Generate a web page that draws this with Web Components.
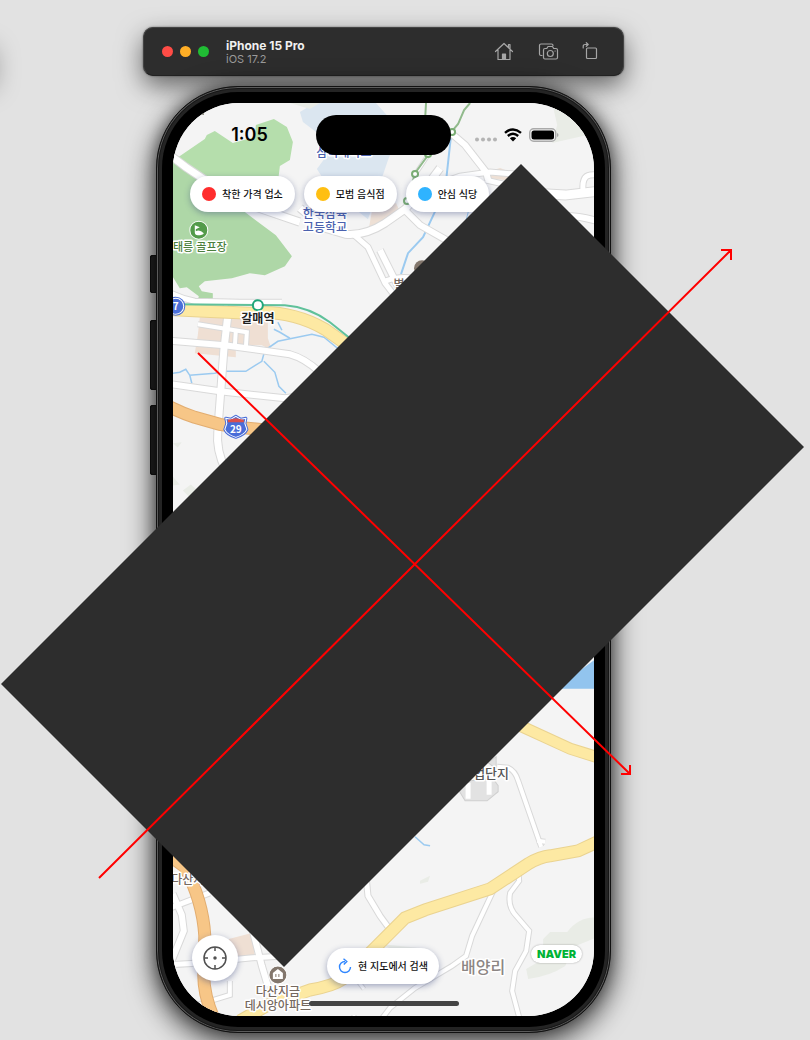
<!DOCTYPE html>
<html lang="ko">
<head>
<meta charset="utf-8">
<meta name="viewport" content="width=device-width, initial-scale=1">
<title>iPhone 15 Pro – iOS 17.2</title>
<style>
  body { margin: 0; background: #e2e2e2; font-family: Inter, "Noto Sans CJK KR", sans-serif; }
</style>
</head>
<body>
<sim-desktop>
  <sim-toolbar>
    <span slot="title">iPhone 15 Pro</span>
    <span slot="subtitle">iOS 17.2</span>
  </sim-toolbar>
  <phone-frame>
    <map-screen>
      <status-bar slot="status">1:05</status-bar>
      <filter-chip slot="filters" color="#ff2d2d">착한 가격 업소</filter-chip>
      <filter-chip slot="filters" color="#ffbf12">모범 음식점</filter-chip>
      <filter-chip slot="filters" color="#2fb3ff">안심 식당</filter-chip>
    </map-screen>
  </phone-frame>
  <axis-overlay slot="overlay"></axis-overlay>
</sim-desktop>

<script>
class Base extends HTMLElement {
  connectedCallback() {
    if (this.shadowRoot) return;
    const t = document.createElement('template');
    t.innerHTML = this.view();
    this.attachShadow({ mode: 'open' }).append(t.content.cloneNode(true));
  }
}

customElements.define('sim-desktop', class extends Base {
  view() { return `
    <style>
      :host { display: grid; grid-template-columns: 143fr 481px 186fr; min-height: 100vh; overflow: hidden; position: relative; }
      :host::before { content: ""; position: absolute; left: -44px; top: 40px; width: 38px; height: 40px; box-shadow: 0 8px 26px rgba(0,0,0,.35); }
      .stage { grid-column: 2; position: relative; display: flex; flex-direction: column; gap: 10px; padding: 27px 0 7px; box-sizing: border-box; }
    </style>
    <main class="stage"><slot></slot><slot name="overlay"></slot></main>`; }
});

customElements.define('sim-toolbar', class extends Base {
  view() { return `
    <style>
      :host { display: flex; align-items: center; height: 49px; box-sizing: border-box; padding: 0 25px 0 18px; background: #2d2d2d;
        border: 1px solid #444; border-bottom-color: #222; border-radius: 10px; box-shadow: 0 10px 26px rgba(0,0,0,.55), 0 0 2px rgba(0,0,0,.5); }
      button { border: 0; padding: 0; background: none; display: block; }
      .lights { display: flex; gap: 7px; }
      .lights button { width: 11px; height: 11px; border-radius: 50%; background: var(--c); }
      .names { margin-left: 17px; flex: 1; display: flex; flex-direction: column; }
      .t { font-size: 12px; line-height: 14px; font-weight: 700; color: #f0f0f0; }
      .s { font-size: 11px; line-height: 12px; color: #9a9a9a; }
      .tools { display: flex; gap: 24px; }
      svg { display: block; fill: none; stroke: #a6a6a6; stroke-width: 1.2; stroke-linejoin: round; stroke-linecap: round; }
    </style>
    <div class="lights">
      <button aria-label="닫기" style="--c:#ff4c46"></button><button aria-label="최소화" style="--c:#ffae26"></button><button aria-label="확대" style="--c:#20bd34"></button>
    </div>
    <div class="names"><slot class="t" name="title" style="display:block"></slot><slot class="s" name="subtitle" style="display:block"></slot></div>
    <div class="tools">
      <button aria-label="홈"><svg width="20" height="20" viewBox="0 0 20 20"><path d="M1.500 9.500 10 1.500l8.500 8M4 8V17.500H16V8M14.500 5V2.500h1.500V7"/><path d="M8.500 17.500V12h3v5.500z" fill="#a6a6a6"/></svg></button>
      <button aria-label="스크린샷"><svg width="22" height="20" viewBox="0 0 22 20"><path d="M4 13.500H3A1.500 1.500 0 0 1 1.500 12V3.500A1.500 1.500 0 0 1 3 2H13.500A1.500 1.500 0 0 1 15 3.500"/><path d="M7 6.500h1.800l1.200-2h4.500l1.200 2h2.300a1.500 1.500 0 0 1 1.500 1.500v7.500a1.500 1.500 0 0 1-1.500 1.500H7a1.500 1.500 0 0 1-1.500-1.500V8A1.500 1.500 0 0 1 7 6.500z"/><circle cx="12.300" cy="11.500" r="3"/><path d="M17 9h.2"/></svg></button>
      <button aria-label="회전" style="margin-left:-4px"><svg width="18" height="20" viewBox="0 0 18 20"><rect x="6.500" y="6" width="10" height="10.500" rx="1"/><path d="M3.200 6V4.500q0-2 2-2H8M6.300.7 8.200 2.500 6.300 4.300"/></svg></button>
    </div>`; }
});

customElements.define('phone-frame', class extends Base {
  view() { return `
    <style>
      :host { display: block; position: relative; margin: 0 13px; box-sizing: border-box; border-radius: 82px; padding: 5px; background: #242424;
        border: 1px solid #111; box-shadow: inset 0 0 0 1px #5b5b5b, inset 0 0 0 2px #161616, 0 8px 26px 5px rgba(0,0,0,.6), 0 0 14px rgba(0,0,0,.4); }
      .bezel { position: relative; background: #000; border-radius: 76px; padding: 11px; }
      .btn { position: absolute; z-index: -1; left: -7px; width: 8px; background: #262626; border-radius: 3px; box-shadow: inset 1px 0 0 #111, inset 0 0 0 1px #151515; }
    </style>
    <i class="btn" style="top:168px;height:38px"></i><i class="btn" style="top:233px;height:70px"></i><i class="btn" style="top:318px;height:70px"></i>
    <div class="bezel"><slot></slot></div>`; }
});

customElements.define('status-bar', class extends Base {
  view() { return `
    <style>
      :host { display: grid; grid-template-columns: 1fr 135px 1fr; align-items: center; padding-top: 12px; color: #000; }
      .time { text-align: center; padding-left: 10px; font-size: 18px; line-height: 20px; font-weight: 600; }
      .island { height: 40px; border-radius: 20px; background: #000; }
      .icons { display: flex; justify-content: center; align-items: center; gap: 7px; padding-right: 12px; }
      svg { display: block; }
    </style>
    <div class="time"><slot></slot></div>
    <div class="island"></div>
    <div class="icons">
      <svg width="22" height="14" viewBox="0 0 22 14" fill="#b4b4b4"><circle cx="2" cy="11.500" r="2"/><circle cx="8" cy="11.500" r="2"/><circle cx="14" cy="11.500" r="2"/><circle cx="20" cy="11.500" r="2"/></svg>
      <svg width="18" height="14" viewBox="0 0 18 14" fill="none" stroke="#000" stroke-width="2.400"><path d="M1 4.800Q9-2 17 4.800M3.800 8Q9 3.600 14.200 8"/><path d="M9 13.500 5.800 10.300Q9 7.800 12.200 10.300z" fill="#000" stroke="none"/></svg>
      <svg width="30" height="14" viewBox="0 0 30 14"><rect x=".7" y=".7" width="26" height="12.600" rx="4" fill="#f4f4f4" stroke="#aaa" stroke-width="1.400"/><rect x="2.500" y="2.500" width="22.500" height="9" rx="2.500"/><path d="M28 5v4q1.500-.5 1.500-2T28 5z" fill="#aaa"/></svg>
    </div>`; }
});

customElements.define('filter-chip', class extends Base {
  view() { return `
    <style>
      :host { display: block; }
      button { display: flex; align-items: center; gap: 6px; height: 36px; padding: 0 12px; border: 0; border-radius: 18px; background: #fff; color: #111;
        font: 500 10px/16px "Noto Sans CJK KR", sans-serif; white-space: nowrap; box-shadow: 0 2px 6px rgba(50,65,120,.4); }
      i { width: 14px; height: 14px; border-radius: 50%; background: ${this.getAttribute('color')}; }
    </style>
    <button type="button"><i></i><slot></slot></button>`; }
});

/* Roads, drawn as a grey casing with the road colour on top: [width, path] */
const WHITE = [
  [7, 'M165 151L186 167L235 200L300 222'], [7, 'M300 208L325 228L345 234Q365 236 385 223L405 209L425 188L440 168'],
  [6, 'M452 134L465 145L486 172L488 180'], [3, 'M428 155L416 173'], [6, 'M404 209L420 225L450 242'],
  [5, 'M352 233L368 247L385 283L398 300'], [6, 'M380 250L400 290'], [5, 'M385 281Q400 275 420 279'],
  [5, 'M440 183L460 176L490 172L515 174'], [5, 'M486 180L530 190'], [9, 'M530 193L565 195L600 191'],
  [5, 'M583 192Q581 176 590 175L600 174'], [6, 'M560 216Q580 215 600 222'],
  [5, 'M165 290Q180 298 195 301L240 302L282 302'], [6, 'M165 340L225 345L290 354Q305 358 320 372'],
  [6, 'M165 383L220 391L285 398L300 396'], [7, 'M228 315L224 350L218 430Q216 450 226 470'],
  [4, 'M198 324L247 332L246 348'], [4, 'M236 330L235 347'], [4, 'M226 303V318'],
  [4, 'M497 766L508 767Q515 770 518 780L541 846'], [4, 'M537 840L545 841'],
  [4, 'M518 866L519 880L510 892Q507 906 517 916L529 930L526 950L515 970L512 990L520 1020'],
  [4, 'M494 888L472 935L466 955L452 965L415 987L390 1007L380 1020'],
  [5, 'M366 875L368 895L380 915L388 926'], [5, 'M168 908L210 892'], [6, 'M173 893L182 914L184 930L171 962'],
  [5, 'M168 964L200 962L250 957L285 955'], [6, 'M253 930L262 965L268 985'], [4, 'M230 980V994L178 1010'],
  [3, 'M354 975L364 988'], [3, 'M354 1020V1014']
];
const YELLOW = [
  [11, 'M165 309L205 311L250 313Q290 309 325 329L352 348'],
  [10, 'M520 725L570 748L602 758'],
  [11, 'M240 1020L268 1004L310 989Q333 985 343 978L372 950L405 917L425 909L490 888L528 863Q540 856 550 855L578 850L604 838']
];
const ORANGE = [[11, 'M165 404Q180 412 195 417L220 424L240 427L270 430'], [11, 'M170 855L185 866Q203 900 205 935L204 975Q204 995 215 1020']];
const road = (list, casing, fill) =>
  list.map(([w, d]) => `<path d="${d}" stroke="${casing}" stroke-width="${w + 2}"/>`).join('') +
  list.map(([w, d]) => `<path d="${d}" stroke="${fill}" stroke-width="${w}"/>`).join('');

customElements.define('street-map', class extends Base {
  view() { return `
    <style>
      :host { display: block; background: #f4f4f4; }
      svg { display: block; width: 100%; height: 100%; }
      text { font: 500 12px "Noto Sans CJK KR", sans-serif; text-anchor: middle; paint-order: stroke; stroke: #fff; stroke-width: 3px; stroke-linejoin: round; }
      .school { fill: #4a61ae; } .poi { fill: #76695f; } .station { fill: #222; font-weight: 700; } .park { fill: #4b7f3c; font-size: 11px; }
      .shield { stroke: none; fill: #fff; font-weight: 700; font-size: 10px; } .town { fill: #8c8684; font-size: 16px; }
      .area { fill: #555; font-size: 13px; }
    </style>
    <svg viewBox="173 103 421 912" preserveAspectRatio="xMidYMid slice" role="img" aria-label="지도">
      <path fill="#dbe6f0" d="M300 112L315 103H376L400 130L388 160L368 219L350 205L324 180L317 169L325 158L320 135L303 122z"/>
      <path fill="#b5deac" d="M170 163L205 139L207 135L215 131L233 143L255 137L256 125L274 119L287 127L293 142L290 160L280 166L276 200L170 190z"/>
      <path fill="#aed7a7" d="M170 158L245 212L276 235L292 256L285 266L265 275L250 273L232 278L205 281L199 286L202 291L213 293V300H198L199 296L187 287L180 288L170 272z"/>
      <path fill="#eee0d5" d="M372 210L396 203L400 212L385 223L369 228zM487 172L500 168L515 174L512 181L488 178z"/>
      <path fill="#efdfd3" d="M200 317H268V338L272 350L262 345L236 345V357L195 353L198 335z"/>
      <path fill="#efdfd3" d="M229 938L252 932L255 955L225 957z"/>
      <path fill="#e9ece6" d="M552 103L557 125L552 143L600 132V103zM526 968L543 958V938L550 931L567 931Q580 914 600 917V935L573 946L565 965Q550 975 528 978zM420 880L430 875L428 881L420 883zM173 443L182 442L178 447zM173 476L180 484L173 485zM183 490L191 484L198 490L190 497zM430 948L392 948L380 943zM290 103H320L310 109z"/>
      <path fill="#92c4ee" d="M555 688L600 655V688z"/>
      <path fill="#e2e2e2" stroke="#cfcfcf" d="M459 790L470 780L493 778L498 785V791L487 800H465zM488 762L496 756V768z"/>
      <g fill="none" stroke="#9bcaf0" stroke-width="1.500">
        <path stroke-width="2" d="M451 135L445 190L423 237L408 253L401 274"/>
        <path d="M165 374L180 372L186 369L190 375L215 373L222 371L246 371L262 361L265 350L278 341L312 334L324 337L340 350M190 375L192 383M264 361L275 372L279 386L286 393M274 329L280 332L290 338M278 322L282 330M415 836L424 844L430 845"/>
        <path stroke-width="1" d="M470 205L466 220"/>
      </g>
      <g fill="none">
        ${road(WHITE, '#d9d9d9', '#fff')}
        ${road(YELLOW, '#ead390', '#fde9a3')}
        ${road(ORANGE, '#e2ad70', '#f7c687')}
        <path d="M165 304L285 305Q310 307 330 322L350 338" stroke="#5fc19a" stroke-width="2"/>
        <path d="M426 103L425 120M470 103L464 110L458 124L452 131M428 155L415 173L409 195" stroke="#91ba8c" stroke-width="2"/>
      </g>
      <path stroke="#fff" stroke-width="5" d="M468 782V798M489 778V794"/>
      <g fill="#fff" stroke="#7aad74" stroke-width="2"><circle cx="452" cy="132" r="3"/><circle cx="428" cy="154" r="3"/><circle cx="415" cy="174" r="3"/><circle cx="407" cy="201" r="3"/></g>
      <circle cx="258" cy="305" r="5" fill="#fff" stroke="#21a67a" stroke-width="2"/>
      <circle cx="199" cy="230" r="9" fill="#539b4a" stroke="#fff"/><path fill="#fff" d="M195 232V225L200 227L196 229V231Q200 229 204 233Q203 235 198 235Q195 235 195 232z"/>
      <circle cx="422" cy="268" r="8" fill="#83776d"/>
      <circle cx="176" cy="306" r="8" fill="#4a6fd9" stroke="#fff"/><circle cx="176" cy="306" r="9" fill="none" stroke="#4a6fd9"/>
      <text class="shield" x="176" y="310">7</text>
      <path d="M226 418L231 419L236 416L241 419L246 418L245 423L247 429Q245 434 236 437Q227 434 225 429L227 423z" fill="#496dd8" stroke="#496dd8" stroke-width="3" stroke-linejoin="round"/>
      <path d="M226 418L231 419L236 416L241 419L246 418L245 423L247 429Q245 434 236 437Q227 434 225 429L227 423z" fill="#496dd8" stroke="#fff"/>
      <path fill="#d9504d" d="M228 419.500L236 418L244 419.500V422H228z"/>
      <text class="shield" x="236" y="433">29</text>
      <text class="school" x="344" y="157">삼육대학교</text>
      <text class="school" x="325" y="218">한국삼육</text><text class="school" x="325" y="232">고등학교</text>
      <text class="park" x="200" y="251">태릉 골프장</text>
      <text class="station" x="258" y="323">갈매역</text>
      <text class="poi" x="399" y="289">별</text>
      <text class="area" x="491" y="777">업단지</text>
      <text class="poi" x="188" y="883">다산지</text>
      <text class="poi" x="278" y="995">다산지금</text><text class="poi" x="278" y="1009">데시앙아파트</text>
      <text class="town" x="483" y="972">배양리</text>
      <circle cx="278" cy="974" r="9" fill="#83776d" stroke="#fff"/><path fill="#fff" d="M278 968L283 972V978H273V972z"/><path stroke="#83776d" d="M276 973V976M279 973V976"/>
      <path d="M198 110L204 112V115L201 114z" fill="#665"/>
    </svg>`; }
});

customElements.define('map-screen', class extends Base {
  view() { return `
    <style>
      :host { position: relative; isolation: isolate; display: flex; flex-direction: column; aspect-ratio: 421 / 913; border-radius: 66px; overflow: hidden; background: #f4f4f4; }
      street-map { position: absolute; inset: 0; z-index: -1; }
      .filters { display: flex; gap: 9px; padding: 21px 17px 0; }
      .foot { margin-top: auto; display: grid; grid-template-columns: 1fr auto 1fr; height: 49px; padding: 0 12px 0 19px; }
      button { border: 0; padding: 0; background: #fff; box-shadow: 0 2px 6px rgba(50,65,120,.45); }
      .locate { width: 46px; height: 46px; border-radius: 50%; display: grid; place-items: center; }
      .search { align-self: end; height: 36px; padding: 0 11px; border-radius: 18px; display: flex; align-items: center; gap: 6px; color: #111;
        font: 500 10px/16px "Noto Sans CJK KR", sans-serif; white-space: nowrap; margin-right: 8px; }
      .naver { justify-self: end; align-self: start; margin-top: 10px; height: 18px; padding: 0 6px; border-radius: 9px; background: #fff; box-shadow: 0 0 2px rgba(0,0,0,.35);
        color: #00b336; font: 900 11px/18px Inter, sans-serif; text-decoration: none; }
      .home { width: 150px; height: 5px; border-radius: 3px; background: #444; align-self: center; margin: 17px 0 10px; }
      svg { display: block; fill: none; }
    </style>
    <street-map></street-map>
    <slot name="status"></slot>
    <div class="filters"><slot name="filters"></slot></div>
    <div class="foot">
      <button class="locate" aria-label="내 위치"><svg width="26" height="26" viewBox="0 0 26 26" stroke="#505050" stroke-width="1.500"><circle cx="13" cy="13" r="11"/><path d="M13 2v4M13 20v4M2 13h4M20 13h4"/><circle cx="13" cy="13" r="1" fill="#505050"/></svg></button>
      <button class="search"><svg width="14" height="16" viewBox="0 0 14 16" stroke="#2f86ff" stroke-width="1.400"><path d="M7 3.500A5.500 5.500 0 1 0 12.500 9M5.500.8 8.800 3.500 5.800 6.500"/></svg><span>현 지도에서 검색</span></button>
      <a class="naver" href="#naver">NAVER</a>
    </div>
    <div class="home"></div>`; }
});

customElements.define('axis-overlay', class extends Base {
  view() { return `
    <style>
      :host { position: absolute; left: -143px; top: 0; width: 810px; pointer-events: none; }
      svg { display: block; width: 100%; }
    </style>
    <svg viewBox="0 0 810 1040" aria-hidden="true">
      <path fill="#2d2d2d" d="M521 164L804 447L284 967L1 684z"/>
      <path fill="none" stroke="#f00" stroke-width="2" d="M99 878L731 250M721 250H731V260M198 353L630 774M621 774H630V765"/>
    </svg>`; }
});
</script>
</body>
</html>
